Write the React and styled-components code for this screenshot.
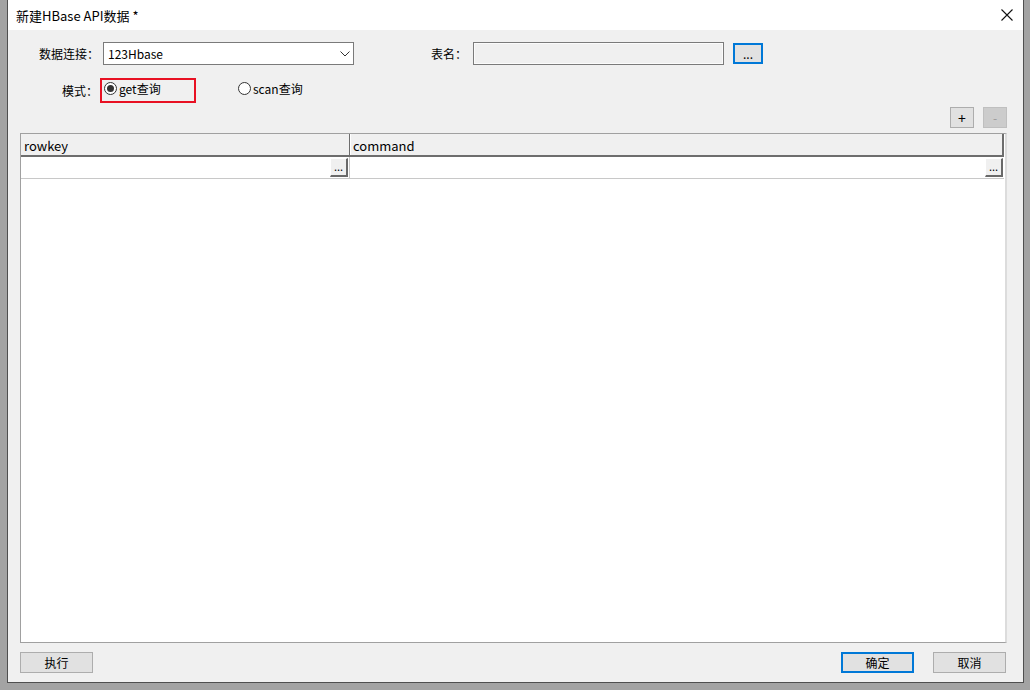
import React from "react";
import styled, { createGlobalStyle } from "styled-components";

const Global = createGlobalStyle`
  html, body { margin: 0; padding: 0; }
  body {
    width: 1030px;
    height: 690px;
    overflow: hidden;
    background: #a3a3a3;
    font-family: "Noto Sans CJK SC", "Noto Sans", sans-serif;
    font-size: 12px;
    color: #000;
  }
`;

const Desk = styled.div`
  height: 690px;
  padding-left: 7px;
  box-sizing: border-box;
`;

const Window = styled.div`
  width: 1017px;
  height: 683px;
  box-sizing: border-box;
  border: 1px solid #4f4f4f;
  border-top: none;
  background: #f0f0f0;
  display: flex;
  flex-direction: column;
`;

const TitleBar = styled.div`
  height: 30px;
  background: #fff;
  display: flex;
  align-items: center;
  justify-content: space-between;
  padding: 0 10px 0 8px;
  font-size: 13px;
`;

const Close = styled.div`
  width: 12px;
  height: 12px;
  display: flex;
`;

const Body = styled.div`
  flex: 1;
  display: flex;
  flex-direction: column;
  padding: 12px 16px 9px 12px;
`;

const Row = styled.div`
  display: flex;
  align-items: center;
  height: ${(p) => p.h || 23}px;
  margin-top: ${(p) => p.mt || 0}px;
`;

const Label = styled.div`
  width: ${(p) => p.w}px;
  text-align: right;
  margin-right: ${(p) => p.gap}px;
  white-space: nowrap;
`;

const Combo = styled.div`
  width: 251px;
  height: 23px;
  box-sizing: border-box;
  border: 1px solid #7a7a7a;
  background: #fff;
  display: flex;
  align-items: center;
  justify-content: space-between;
  padding: 0 3px 0 4px;
`;

const TextBox = styled.div`
  width: 251px;
  height: 23px;
  box-sizing: border-box;
  border: 1px solid #7a7a7a;
  background: #f0f0f0;
  box-shadow: inset 0 0 0 1px #fbfbfb;
  margin-right: 9px;
`;

const Btn = styled.button`
  font-family: inherit;
  font-size: ${(p) => p.fs || 12}px;
  width: ${(p) => p.w}px;
  height: ${(p) => p.h || 21}px;
  box-sizing: border-box;
  padding: 0;
  margin: 0;
  background: ${(p) => (p.disabled ? "#cccccc" : "#e1e1e1")};
  color: ${(p) => (p.disabled ? "#9a9a9a" : "#000")};
  border: ${(p) => (p.primary ? "2px solid #0078d7" : p.disabled ? "1px solid #bfbfbf" : "1px solid #adadad")};
  display: flex;
  align-items: center;
  justify-content: center;
  line-height: 1;
`;

const RadioGroup = styled.div`
  display: flex;
  align-items: center;
  height: 25px;
  box-sizing: border-box;
  border: ${(p) => (p.marked ? "2px solid #e81123" : "2px solid transparent")};
  width: ${(p) => p.w}px;
  margin-right: ${(p) => p.mr || 0}px;
  padding: 0 0 4px 2px;
`;

const Circle = styled.span`
  width: 13px;
  height: 13px;
  box-sizing: border-box;
  border-radius: 50%;
  border: 1px solid #333;
  background: #fff;
  display: flex;
  align-items: center;
  justify-content: center;
  margin-right: 2px;
  &::after {
    content: "";
    width: 7px;
    height: 7px;
    border-radius: 50%;
    background: ${(p) => (p.checked ? "#333" : "transparent")};
  }
`;

const Tools = styled.div`
  display: flex;
  justify-content: flex-end;
  gap: 9px;
  margin-top: 4px;
  height: 21px;
`;

const Grid = styled.div`
  margin-top: 5px;
  flex: 1;
  background: #fff;
  border: 1px solid #a0a0a0;
  border-right: 2px solid #dcdcdc;
  display: flex;
  flex-direction: column;
`;

const HeadRow = styled.div`
  display: flex;
  height: 23px;
  box-sizing: border-box;
  background: #f0f0f0;
  border-bottom: 2px solid #6d6d6d;
  margin-right: 1px;
  border-right: 2px solid #6d6d6d;
`;

const HeadCell = styled.div`
  width: ${(p) => (p.w ? p.w + "px" : "auto")};
  flex: ${(p) => (p.w ? "none" : 1)};
  box-sizing: border-box;
  padding-left: 3px;
  padding-top: 1px;
  display: flex;
  align-items: center;
  font-size: 13px;
  border-right: ${(p) => (p.w ? "1px solid #6d6d6d" : "none")};
  box-shadow: ${(p) => (p.w ? "1px 0 0 #ffffff" : "none")};
`;

const DataRow = styled.div`
  display: flex;
  height: 22px;
  box-sizing: border-box;
  border-bottom: 1px solid #c8c8c8;
  margin-right: 1px;
`;

const DataCell = styled.div`
  width: ${(p) => (p.w ? p.w + "px" : "auto")};
  flex: ${(p) => (p.w ? "none" : 1)};
  box-sizing: border-box;
  display: flex;
  align-items: center;
  justify-content: flex-end;
  padding-right: 1px;
  border-right: ${(p) => (p.w ? "1px solid #c8c8c8" : "none")};
`;

const CellBtn = styled.div`
  width: 18px;
  height: 19px;
  box-sizing: border-box;
  background: #f0f0f0;
  border-right: 2px solid #696969;
  border-bottom: 2px solid #696969;
  border-top: 1px solid #fff;
  border-left: 1px solid #fff;
  font-size: 11px;
  display: flex;
  align-items: flex-end;
  justify-content: center;
  padding-bottom: 3px;
  line-height: 1;
`;

const Footer = styled.div`
  display: flex;
  align-items: center;
  margin-top: 9px;
  padding-right: 1px;
  gap: 19px;
`;

const Spacer = styled.div`
  flex: 1;
`;

const Chevron = () => (
  <svg width="10" height="6" viewBox="0 0 10 6">
    <path d="M0.5 0.5 L5 5 L9.5 0.5" fill="none" stroke="#333" strokeWidth="1" />
  </svg>
);

export default function App() {
  return (
    <>
      <Global />
      <Desk>
        <Window>
          <TitleBar>
            <span>新建HBase API数据 *</span>
            <Close>
              <svg width="12" height="12" viewBox="0 0 12 12">
                <path d="M0.5 0.5 L11.5 11.5 M11.5 0.5 L0.5 11.5" stroke="#111" strokeWidth="1.1" />
              </svg>
            </Close>
          </TitleBar>
          <Body>
            <Row>
              <Label w={79} gap={4}>数据连接：</Label>
              <Combo>
                <span>123Hbase</span>
                <Chevron />
              </Combo>
              <Label w={113} gap={6}>表名：</Label>
              <TextBox />
              <Btn w={30} primary>...</Btn>
            </Row>
            <Row h={25} mt={13}>
              <Label w={78} gap={2}>模式：</Label>
              <RadioGroup marked w={96} mr={38}>
                <Circle checked />
                <span>get查询</span>
              </RadioGroup>
              <RadioGroup w={80}>
                <Circle />
                <span>scan查询</span>
              </RadioGroup>
            </Row>
            <Tools>
              <Btn w={24} fs={14}>+</Btn>
              <Btn w={24} disabled>-</Btn>
            </Tools>
            <Grid>
              <HeadRow>
                <HeadCell w={329}>rowkey</HeadCell>
                <HeadCell>command</HeadCell>
              </HeadRow>
              <DataRow>
                <DataCell w={329}>
                  <CellBtn>...</CellBtn>
                </DataCell>
                <DataCell>
                  <CellBtn>...</CellBtn>
                </DataCell>
              </DataRow>
            </Grid>
            <Footer>
              <Btn w={73}>执行</Btn>
              <Spacer />
              <Btn w={73} primary>确定</Btn>
              <Btn w={73}>取消</Btn>
            </Footer>
          </Body>
        </Window>
      </Desk>
    </>
  );
}
